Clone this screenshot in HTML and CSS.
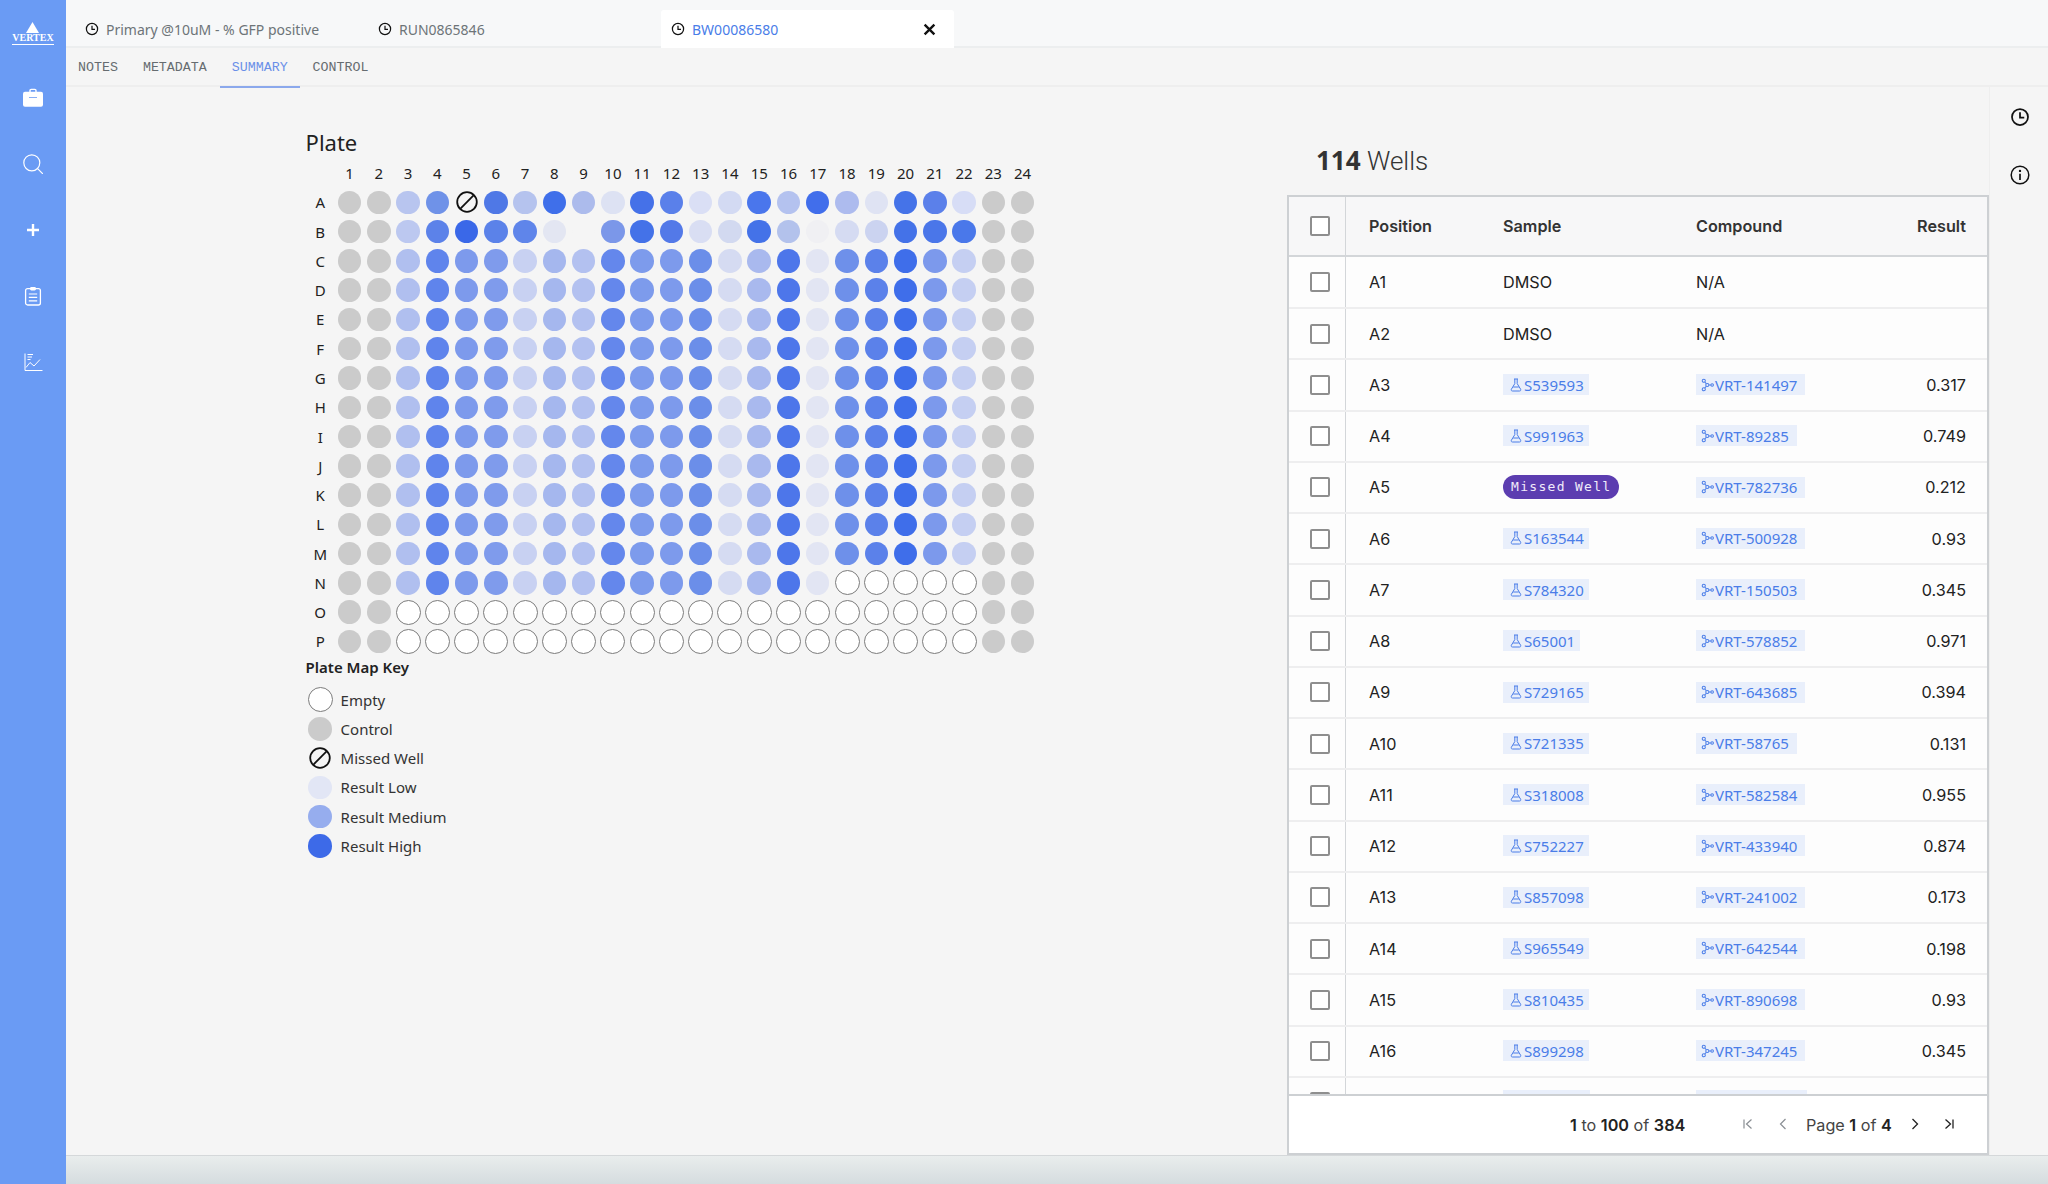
FILE: index.html
```html
<!DOCTYPE html>
<html lang="en">
<head>
    <meta charset="UTF-8">
    <title>BW00086580 - Summary</title>
    <link rel="stylesheet" href="styles.css">
</head>
<body>
    <svg class="sprites" width="0" height="0">
        <symbol id="clock" viewBox="0 0 16 16"><circle cx="8" cy="8" r="6.4" fill="none" stroke="currentColor" stroke-width="1.4"/><path d="M8 4.2V8.4H11.4" fill="none" stroke="currentColor" stroke-width="1.4"/></symbol>
        <symbol id="flask" viewBox="0 0 12 14"><path d="M4 1H8M4.8 1V5.6L1.4 11.2C.9 12.1 1.4 13 2.4 13H9.6C10.6 13 11.1 12.1 10.6 11.2L7.2 5.6V1M3.2 9H8.8" fill="none" stroke="currentColor" stroke-width="1"/></symbol>
        <symbol id="molecule" viewBox="0 0 14 14"><g fill="none" stroke="currentColor" stroke-width="1.1"><circle cx="3" cy="2.4" r="1.7"/><circle cx="3" cy="11.6" r="1.7"/><circle cx="6.8" cy="7" r="1.7"/><circle cx="12" cy="7" r="1.4"/><path d="M4 3.8L5.8 5.6M4 10.2L5.8 8.4M8.5 7H10.6"/></g></symbol>
        <symbol id="missed" viewBox="0 0 22 22"><circle cx="11" cy="11" r="9.8" fill="none" stroke="#111" stroke-width="1.8"/><path d="M4.2 17.8L17.8 4.2" stroke="#111" stroke-width="1.8"/></symbol>
    </svg>

    <nav class="sidebar">
        <div class="logo">
            <svg width="13" height="11" viewBox="0 0 13 11"><path d="M6.5 0L13 11H0Z" fill="#fff"/></svg>
            <span>VERTEX</span>
        </div>
        <svg class="side-icon" viewBox="0 0 20 20"><path d="M7 4V2.6C7 1.9 7.5 1.4 8.2 1.4H11.8C12.5 1.4 13 1.9 13 2.6V4" fill="none" stroke="#fff" stroke-width="1.4"/><rect y="3.8" width="20" height="15" rx="2" fill="#fff"/><path d="M6 9.5H14" stroke="#6a9bf4" stroke-width=".8"/></svg>
        <svg class="side-icon" viewBox="0 0 20 20"><circle cx="8.8" cy="8.8" r="8" fill="none" stroke="#fff" stroke-width="1.2"/><path d="M14.6 14.6L20 20" stroke="#fff" stroke-width="1.2"/></svg>
        <svg class="side-icon" viewBox="0 0 20 20"><path d="M10 4V16M4 10H16" stroke="#fff" stroke-width="2.4"/></svg>
        <svg class="side-icon" viewBox="0 0 20 20"><rect x="2.6" y="2.6" width="14.8" height="16.4" rx="2" fill="none" stroke="#fff" stroke-width="1.3"/><rect x="7" y="1" width="6" height="3.4" rx="1.4" fill="#fff"/><path d="M5.8 8H14.2M5.8 11.4H14.2M5.8 14.8H14.2" stroke="#fff" stroke-width="1.2"/></svg>
        <svg class="side-icon" viewBox="0 0 20 20"><path d="M2 1.5V18.5H19.5" fill="none" stroke="#fff" stroke-width="1"/><path d="M4.5 2.5H10M4.5 5H9M4.5 7.5H7.5" stroke="#fff" stroke-width="1"/><path d="M3 15.5L7 10.5L11 14L17 7.5" fill="none" stroke="#fff" stroke-width="1"/></svg>
    </nav>

    <div class="main">
        <header class="topbar">
            <div class="tab"><svg class="tab-clock"><use href="#clock"/></svg>Primary @10uM - % GFP positive</div>
            <div class="tab"><svg class="tab-clock"><use href="#clock"/></svg>RUN0865846</div>
            <div class="tab active">
                <svg class="tab-clock"><use href="#clock"/></svg>BW00086580
                <svg class="tab-close" viewBox="0 0 12 12"><path d="M1.5 1.5L10.5 10.5M10.5 1.5L1.5 10.5" stroke="#111" stroke-width="2.2"/></svg>
            </div>
        </header>

        <div class="subtabs">
            <a>NOTES</a>
            <a>METADATA</a>
            <a class="current">SUMMARY</a>
            <a>CONTROL</a>
        </div>

        <div class="content">
            <section class="plate-panel">
                <h2>Plate</h2>
                <div class="plate" id="plate"></div>
                <h3>Plate Map Key</h3>
                <ul class="legend">
                    <li><span class="mark"><span class="well empty"></span></span>Empty</li>
                    <li><span class="mark"><span class="well control"></span></span>Control</li>
                    <li><span class="mark"><svg class="well-missed"><use href="#missed"/></svg></span>Missed Well</li>
                    <li><span class="mark"><span class="well low"></span></span>Result Low</li>
                    <li><span class="mark"><span class="well medium"></span></span>Result Medium</li>
                    <li><span class="mark"><span class="well high"></span></span>Result High</li>
                </ul>
            </section>

            <section class="wells-panel">
                <h2><b>114</b> Wells</h2>
                <div class="grid">
                    <div class="row head">
                        <div class="check"><i></i></div>
                        <div class="cell">Position</div>
                        <div class="cell">Sample</div>
                        <div class="cell">Compound</div>
                        <div class="cell result">Result</div>
                    </div>
                    <div class="rows" id="rows"></div>
                    <div class="pager">
                        <span class="count"><b>1</b> to <b>100</b> of <b>384</b></span>
                        <svg class="page-icon first" viewBox="0 0 14 14"><path d="M3 2.5V11.5M10.5 2.5L5.5 7L10.5 11.5" fill="none" stroke="#8a8f94" stroke-width="1.2"/></svg>
                        <svg class="page-icon prev" viewBox="0 0 14 14"><path d="M9.5 2L4.5 7L9.5 12" fill="none" stroke="#8a8f94" stroke-width="1.2"/></svg>
                        <span class="page">Page <b>1</b> of <b>4</b></span>
                        <svg class="page-icon next" viewBox="0 0 14 14"><path d="M4.5 2L9.5 7L4.5 12" fill="none" stroke="#222" stroke-width="1.3"/></svg>
                        <svg class="page-icon last" viewBox="0 0 14 14"><path d="M3.5 2.5L8.5 7L3.5 11.5M11 2.5V11.5" fill="none" stroke="#222" stroke-width="1.3"/></svg>
                    </div>
                </div>
            </section>

            <aside class="rail">
                <svg class="rail-icon"><use href="#clock"/></svg>
                <svg class="rail-icon" viewBox="0 0 20 20"><circle cx="10" cy="10" r="8.8" fill="none" stroke="#111" stroke-width="1.5"/><path d="M10 8.8V15" stroke="#111" stroke-width="1.7"/><circle cx="10" cy="5.9" r="1.2" fill="#111"/></svg>
            </aside>
        </div>

        <footer class="footer"></footer>
    </div>

    <script src="script.js"></script>
</body>
</html>
```

FILE: styles.css
```css
* {
    box-sizing: border-box;
}
html, body {
    height: 100%;
}
body {
    margin: 0;
    display: flex;
    overflow: hidden;
    background-color: #f5f5f5;
    font-family: "Noto Sans", Arial, sans-serif;
    color: #222;
}
.sprites {
    position: absolute;
}

/* sidebar */
.sidebar {
    width: 66px;
    flex-shrink: 0;
    background-color: #6a9bf4;
    display: flex;
    flex-direction: column;
    align-items: center;
    padding-top: 22px;
}
.logo {
    height: 45px;
    margin-bottom: 21px;
    display: flex;
    flex-direction: column;
    align-items: center;
    color: #fff;
}
.logo span {
    font-family: "Liberation Serif", serif;
    font-size: 10px;
    font-weight: bold;
    line-height: 10px;
    border-bottom: 1px solid #fff;
    padding-bottom: 1px;
}
.side-icon {
    width: 20px;
    height: 20px;
    margin-bottom: 46px;
}

/* tabs */
.main {
    flex: 1;
    min-width: 0;
    display: flex;
    flex-direction: column;
}
.topbar {
    height: 48px;
    flex-shrink: 0;
    display: flex;
    padding: 10px 0 0 9px;
    background-color: #f7f8f9;
    border-bottom: 2px solid #eceeef;
}
.tab {
    width: 293px;
    height: 38px;
    display: flex;
    align-items: center;
    padding-left: 10px;
    font-size: 14px;
    color: #6d7478;
}
.tab-clock {
    width: 14px;
    height: 14px;
    margin-right: 7px;
    color: #111;
}
.tab.active {
    background-color: #fff;
    color: #4a7de8;
    border-radius: 3px 3px 0 0;
}
.tab-close {
    width: 13px;
    height: 13px;
    margin-left: 145px;
}
.subtabs {
    height: 39px;
    flex-shrink: 0;
    display: flex;
    padding-top: 1px;
    border-bottom: 2px solid #eeeeee;
}
.subtabs a {
    padding: 0 12px;
    margin-right: 1px;
    line-height: 37px;
    font-family: "Liberation Mono", monospace;
    font-size: 13.3px;
    color: #666c70;
}
.subtabs a.current {
    color: #6a8fe8;
    border-bottom: 2px solid #8ba8ec;
    height: 39px;
}

/* plate */
.content {
    flex: 1;
    min-height: 0;
    display: flex;
}
.plate-panel {
    width: 1221px;
    flex-shrink: 0;
    padding: 40px 0 0 239.6px;
}
.plate-panel h2 {
    margin: 0;
    font-size: 22px;
    font-weight: 400;
    line-height: 30px;
    color: #222;
}
.plate {
    display: grid;
    grid-template-columns: repeat(25, 29.27px);
    grid-auto-rows: 29.27px;
    margin-top: 1.5px;
    font-size: 15px;
    color: #222;
}
.plate-label, .plate-slot {
    display: flex;
    align-items: center;
    justify-content: center;
}
.well {
    width: 23.5px;
    height: 23.5px;
    flex-shrink: 0;
    border-radius: 50%;
    display: block;
}
.well.empty {
    width: 25px;
    height: 25px;
    background-color: #fff;
    border: 1.5px solid #7c7c7c;
}
.well.control {
    background-color: #cbcbcb;
}
.well.low {
    background-color: #e2e6f5;
}
.well.medium {
    background-color: #96adee;
}
.well.high {
    background-color: #3d6ae8;
}
.well-missed {
    width: 22px;
    height: 22px;
    flex-shrink: 0;
}
.plate-panel h3 {
    margin: -1.5px 0 0;
    font-size: 15px;
    font-weight: 600;
    line-height: 24px;
    color: #222;
}
.legend {
    list-style: none;
    margin: 6.5px 0 0;
    padding: 0;
    font-size: 15px;
    color: #333;
}
.legend li {
    height: 29.27px;
    display: flex;
    align-items: center;
}
.mark {
    width: 25px;
    margin: 0 8px 0 2px;
    display: flex;
    justify-content: center;
}

/* wells table */
.wells-panel {
    width: 702px;
    flex-shrink: 0;
    display: flex;
    flex-direction: column;
}
.wells-panel h2 {
    height: 108px;
    margin: 0;
    padding: 52px 0 0 29px;
    font-family: Roboto, "Noto Sans", sans-serif;
    font-size: 26px;
    font-weight: 300;
    line-height: 42px;
    color: #333;
}
.wells-panel h2 b {
    font-family: "Noto Sans", sans-serif;
    font-weight: 700;
}
.grid {
    flex: 1;
    min-height: 0;
    display: flex;
    flex-direction: column;
    border: 2px solid #cdd0d3;
    background-color: #fdfdfd;
    font-family: Inter, Arial, sans-serif;
    font-size: 16.2px;
    color: #222;
}
.row {
    height: 51.25px;
    flex-shrink: 0;
    display: grid;
    grid-template-columns: 57px 157px 193px 1fr 140px;
    align-items: center;
    border-bottom: 2px solid #eeeeef;
}
.row.head {
    height: 60px;
    background-color: #f7f7f8;
    border-bottom: 2px solid #d3d6d9;
    font-weight: 600;
    color: #333;
}
.rows .row:first-child {
    height: 52px;
}
.check {
    height: 100%;
    display: flex;
    align-items: center;
    justify-content: center;
    border-right: 1px solid #d3d6d9;
    padding-left: 6px;
}
.check i {
    width: 20px;
    height: 20px;
    border: 2px solid #8e8e8e;
    border-radius: 2px;
    background-color: #fff;
}
.cell {
    padding-left: 23px;
}
.cell + .cell {
    padding-left: 0;
}
.cell.result {
    text-align: right;
    padding-right: 21px;
}
.rows {
    flex: 1;
    min-height: 0;
    overflow: hidden;
}
.chip {
    display: inline-flex;
    align-items: center;
    height: 21px;
    padding: 0 5px 0 7px;
    background-color: #e9effb;
    font-family: "Noto Sans", Arial, sans-serif;
    font-size: 15px;
    color: #4a7de8;
}
.chip svg {
    width: 12px;
    height: 14px;
    margin-right: 2px;
}
.chip.compound {
    padding: 0 8px 0 5px;
}
.chip.compound svg {
    width: 13px;
    margin-right: 1px;
}
.chip.blank-sample {
    width: 87px;
}
.chip.blank-compound {
    width: 111px;
}
.pill {
    display: inline-block;
    height: 24px;
    padding: 0 8px;
    border-radius: 12px;
    background-color: #5c3db0;
    font-family: "DejaVu Sans Mono", monospace;
    font-size: 13px;
    letter-spacing: 1.3px;
    line-height: 24px;
    color: #f1ecfb;
}
.pager {
    height: 59px;
    flex-shrink: 0;
    display: flex;
    align-items: center;
    padding-left: 281px;
    background-color: #fff;
    border-top: 2px solid #cdd0d3;
    font-size: 16.2px;
    color: #444;
}
.pager b {
    font-weight: 600;
    color: #222;
}
.count {
    width: 171px;
}
.page-icon {
    width: 14px;
    height: 14px;
    margin-top: -1px;
}
.page-icon.prev {
    margin-left: 21px;
}
.page {
    margin: 0 16px 0 16px;
}
.page-icon.last {
    margin-left: 20px;
}

/* right rail */
.rail {
    flex: 1;
    display: flex;
    flex-direction: column;
    align-items: center;
    padding: 20px 0 0 2px;
    border-left: 1px solid #eeeeee;
}
.rail-icon {
    width: 20px;
    height: 20px;
    margin-bottom: 38px;
    color: #111;
}

.footer {
    height: 29px;
    flex-shrink: 0;
    background: linear-gradient(#e9eded, #d5dcdf);
    border-top: 1px solid #d5d8da;
}
```

FILE: script.js
```js
const G = 'control';
const E = 'empty';
const M = 'missed';

const rowA = [G, G, '#b8c5ef', '#6f92e8', M, '#4f78e6', '#b5c3ee', '#3f6fea', '#acbbec', '#dde2f3', '#4571e8', '#5a80ea', '#dadff5', '#d3daf3', '#4a76ec', '#b4c2ef', '#416eeb', '#adbbee', '#dfe3f3', '#4573e8', '#5b80ea', '#d7ddf6', G, G];
const rowB = [G, G, '#bcc8f0', '#5c82e9', '#3a68e8', '#5b82e9', '#5f85ea', '#e3e6f2', '#f5f5f5', '#7b97e9', '#4472e8', '#5379e8', '#d9def3', '#d2d9f0', '#4472e8', '#b3c2ec', '#f0f0f3', '#d5dbf2', '#cbd3f0', '#4472e8', '#4a76e9', '#4a78ea', G, G];
const rowC = [G, G, '#b0bfef', '#5f84ec', '#7d9aec', '#7f9bec', '#c8d1f2', '#a5b7ee', '#b3c1f0', '#6487ec', '#7d9bec', '#7d9aec', '#6b8ee9', '#d5dbf2', '#a9b9ee', '#4d76ea', '#e2e5f3', '#6e90ea', '#5b81ea', '#3f6eea', '#7c99ec', '#c5cff2', G, G];

const letters = 'ABCDEFGHIJKLMNOP'.split('');
const plate = document.getElementById('plate');

function addCell(cls, text) {
    const cell = document.createElement('div');
    cell.className = cls;
    cell.textContent = text || '';
    plate.appendChild(cell);
    return cell;
}

function wellValue(row, col) {
    if (row === 0) return rowA[col];
    if (row === 1) return rowB[col];
    const blank = col >= 2 && col <= 21;
    if (row >= 14 && blank) return E;
    if (row === 13 && col >= 17 && blank) return E;
    return rowC[col];
}

addCell('plate-label');
for (let c = 1; c <= 24; c++) addCell('plate-label', c);

letters.forEach(function (letter, r) {
    addCell('plate-label', letter);
    for (let c = 0; c < 24; c++) {
        const value = wellValue(r, c);
        const slot = addCell('plate-slot');
        if (value === M) {
            slot.innerHTML = '<svg class="well-missed"><use href="#missed"/></svg>';
        } else if (value === G || value === E) {
            slot.innerHTML = '<span class="well ' + value + '"></span>';
        } else {
            slot.innerHTML = '<span class="well" style="background-color:' + value + '"></span>';
        }
    }
});

const wells = [
    ['A1', 'DMSO', 'N/A', ''],
    ['A2', 'DMSO', 'N/A', ''],
    ['A3', 'S539593', 'VRT-141497', '0.317'],
    ['A4', 'S991963', 'VRT-89285', '0.749'],
    ['A5', 'Missed Well', 'VRT-782736', '0.212'],
    ['A6', 'S163544', 'VRT-500928', '0.93'],
    ['A7', 'S784320', 'VRT-150503', '0.345'],
    ['A8', 'S65001', 'VRT-578852', '0.971'],
    ['A9', 'S729165', 'VRT-643685', '0.394'],
    ['A10', 'S721335', 'VRT-58765', '0.131'],
    ['A11', 'S318008', 'VRT-582584', '0.955'],
    ['A12', 'S752227', 'VRT-433940', '0.874'],
    ['A13', 'S857098', 'VRT-241002', '0.173'],
    ['A14', 'S965549', 'VRT-642544', '0.198'],
    ['A15', 'S810435', 'VRT-890698', '0.93'],
    ['A16', 'S899298', 'VRT-347245', '0.345']
];

function sampleHtml(sample) {
    if (sample === 'DMSO') return sample;
    if (sample === 'Missed Well') return '<span class="pill">Missed Well</span>';
    return '<span class="chip"><svg><use href="#flask"/></svg>' + sample + '</span>';
}

function compoundHtml(compound) {
    if (compound === 'N/A') return compound;
    return '<span class="chip compound"><svg><use href="#molecule"/></svg>' + compound + '</span>';
}

// the row after A16 only shows its top edge above the pager
const partialRow = '<div class="row">' +
    '<div class="check"><i></i></div>' +
    '<div class="cell"></div>' +
    '<div class="cell"><span class="chip blank-sample"></span></div>' +
    '<div class="cell"><span class="chip blank-compound"></span></div>' +
    '<div class="cell result"></div>' +
    '</div>';

document.getElementById('rows').innerHTML = wells.map(function (w) {
    return '<div class="row">' +
        '<div class="check"><i></i></div>' +
        '<div class="cell">' + w[0] + '</div>' +
        '<div class="cell">' + sampleHtml(w[1]) + '</div>' +
        '<div class="cell">' + compoundHtml(w[2]) + '</div>' +
        '<div class="cell result">' + w[3] + '</div>' +
        '</div>';
}).join('') + partialRow;
```
